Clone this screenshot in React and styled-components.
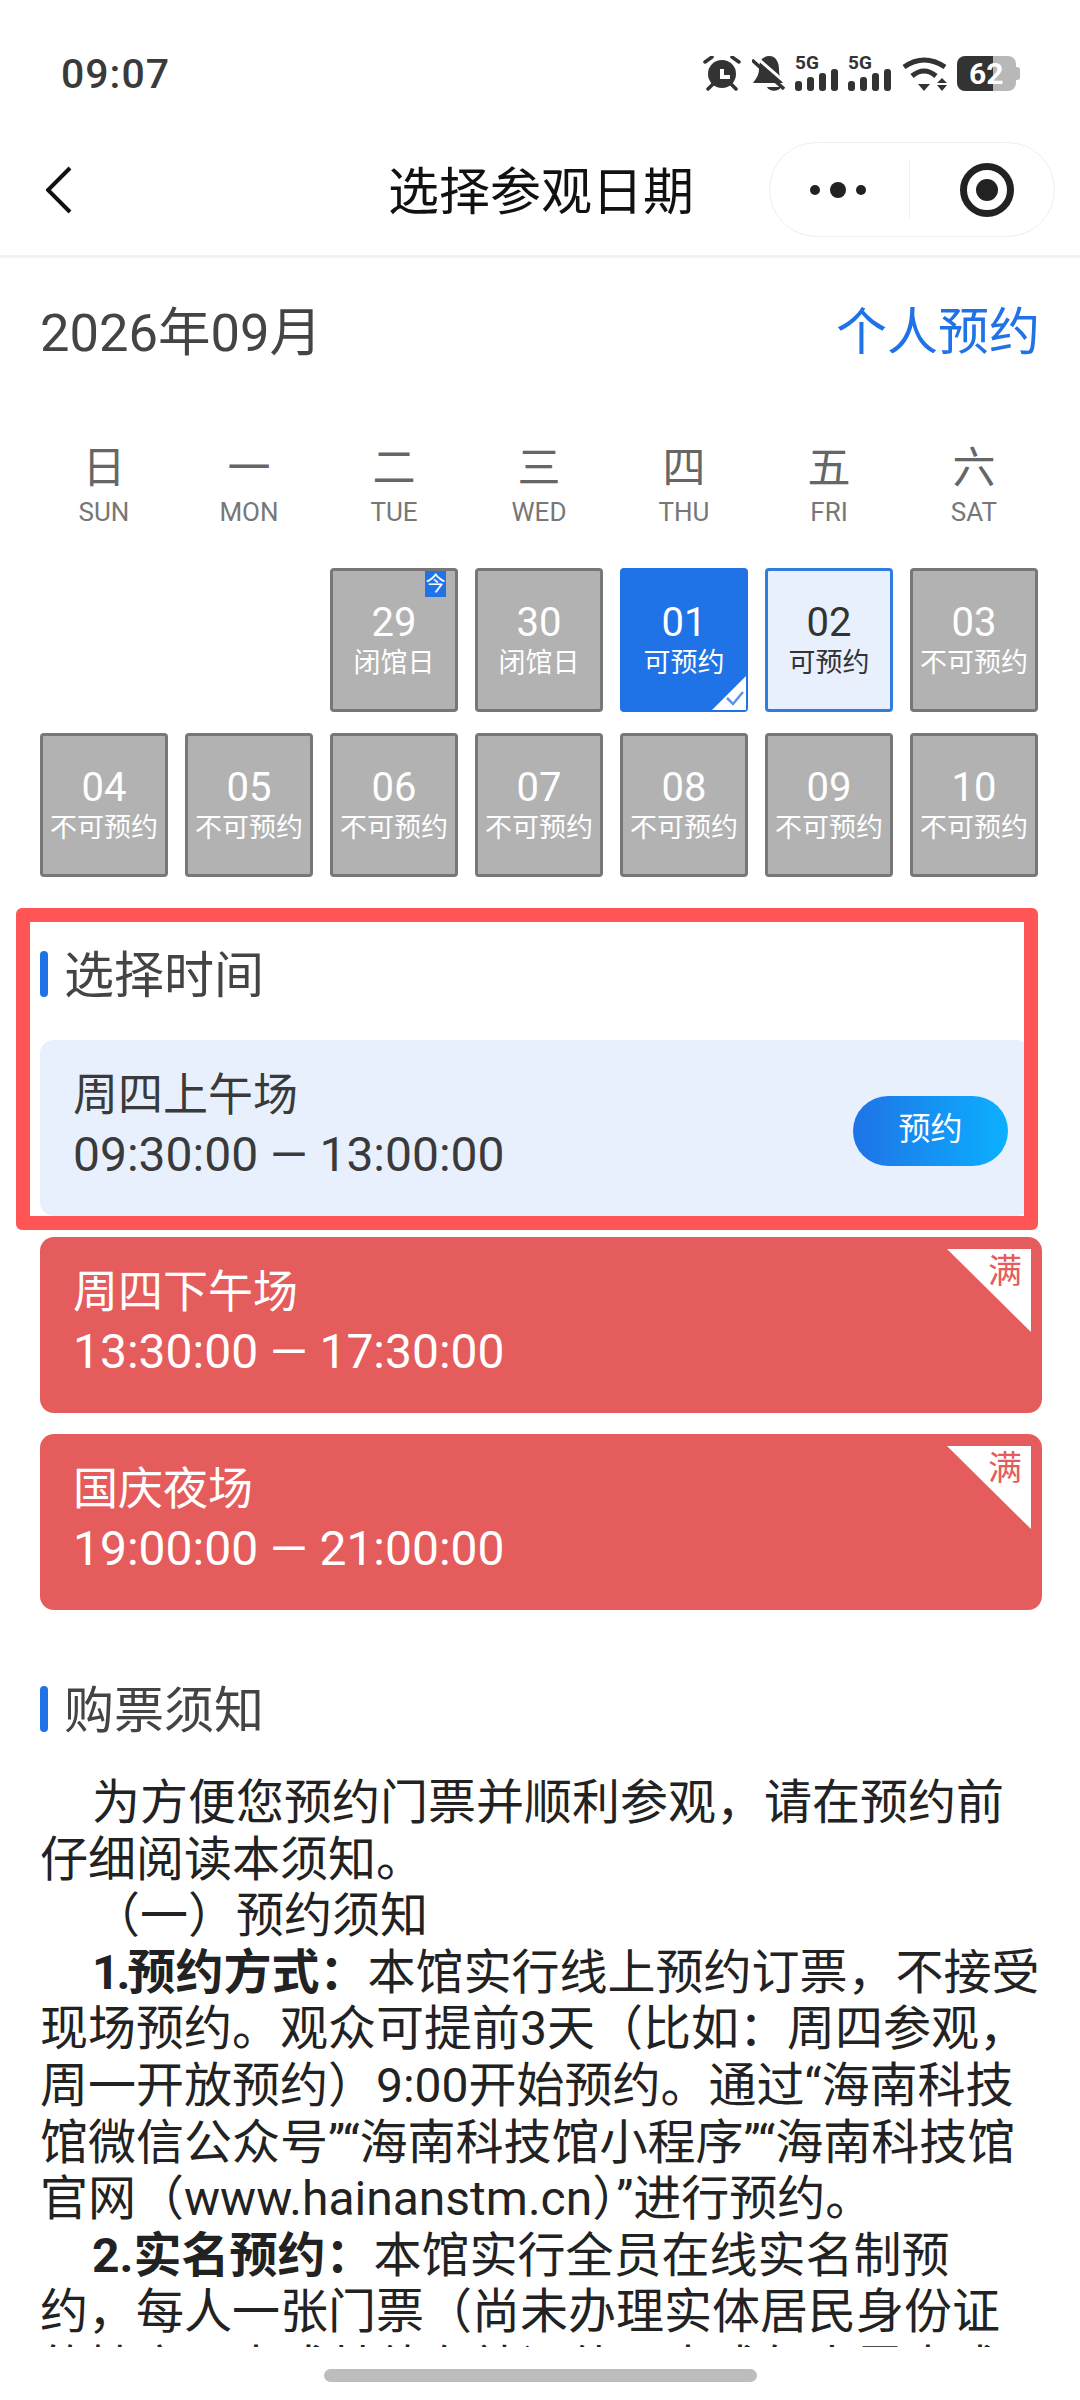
import styled, { createGlobalStyle } from "styled-components"

const GlobalStyle = createGlobalStyle`
html, body {
  margin: 0;
  padding: 0;
  background: #fff;
}
* {
  box-sizing: border-box;
}
`

const Page = styled.div`
position: relative;
width: 1080px;
height: 2400px;
overflow: hidden;
background: #fff;
font-family: Roboto, "Noto Sans CJK SC", sans-serif;
color: #333;
`

const StatusBar = styled.div`
height: 142px;
padding: 56px 60px 0 61px;
display: flex;
justify-content: space-between;
align-items: flex-start;
`
const Clock = styled.div`
font-size: 41px;
line-height: 36px;
font-weight: 500;
letter-spacing: 1px;
color: #3a3a3a;
`
const StatusIcons = styled.div`
display: flex;
align-items: flex-start;
gap: 10px;
`
const Signal = styled.div`
width: ${(props) => props.$w}px;
height: 35px;
display: flex;
flex-direction: column;
`
const SignalLabel = styled.span`
font-size: 19px;
line-height: 13px;
font-weight: 700;
color: #333;
`
const Battery = styled.div`
position: relative;
width: 59px;
height: 35px;
margin-right: 4px;
padding-left: 12px;
border-radius: 8px;
background: linear-gradient(90deg, #333 0 36px, #b8b8b8 36px);
color: #fff;
font-size: 30px;
line-height: 35px;
font-weight: 700;
&::after {
  content: "";
  position: absolute;
  right: -4px;
  top: 11px;
  width: 4px;
  height: 13px;
  border-radius: 0 3px 3px 0;
  background: #b8b8b8;
}
`

const NavBar = styled.div`
height: 116px;
padding: 0 25px 21px 27px;
display: grid;
grid-template-columns: 1fr auto 1fr;
align-items: center;
border-bottom: 3px solid #f2f2f2;
`
const BackButton = styled.div`
padding-left: 19px;
display: flex;
`
const NavTitle = styled.div`
padding-top: 6px;
font-size: 51px;
line-height: 60px;
color: #111;
`
const Capsule = styled.div`
justify-self: end;
width: 286px;
height: 95px;
border: 1px solid #eee;
border-radius: 48px;
display: flex;
align-items: center;
`
const CapsulePart = styled.div`
flex: 1;
padding: ${(props) => props.$pad};
display: flex;
align-items: center;
justify-content: center;
`
const CapsuleLine = styled.div`
width: 1px;
height: 57px;
background: #eee;
`

const Content = styled.div`
padding: 0 40px;
`
const MonthRow = styled.div`
padding-top: 42px;
display: flex;
justify-content: space-between;
align-items: center;
`
const MonthText = styled.div`
font-size: 52.5px;
line-height: 66px;
color: #444;
`
const PersonLink = styled.div`
font-size: 51px;
line-height: 66px;
color: #1f73e6;
`

const DayGrid = styled.div`
display: grid;
grid-template-columns: repeat(7, 128px);
column-gap: 17px;
row-gap: 21px;
`
const WeekRow = styled(DayGrid)`
margin-top: 80px;
margin-bottom: 41px;
`
const WeekDay = styled.div`
display: flex;
flex-direction: column;
align-items: center;
gap: 7px;
color: #666;
`
const WeekZh = styled.div`
font-size: 43px;
line-height: 44px;
`
const WeekEn = styled.div`
font-size: 26px;
line-height: 30px;
color: #777;
`

const cellColors = {
  off: "background: #b2b2b2; border-color: #777; color: #fff;",
  active: "background: #1f73e6; border-color: #1f73e6; color: #fff;",
  open: "background: #e8f0fd; border-color: #2f7de1; color: #333;",
}
const Cell = styled.div`
position: relative;
height: 144px;
padding-top: 28px;
border: 3px solid;
border-radius: 4px;
display: flex;
flex-direction: column;
align-items: center;
${(props) => cellColors[props.$kind]}
`
const CellDay = styled.div`
font-size: 40px;
line-height: 48px;
`
const CellLabel = styled.div`
font-size: 27px;
line-height: 32px;
white-space: nowrap;
`
const TodayBadge = styled.div`
position: absolute;
top: 0;
right: 9px;
width: 21px;
height: 26px;
background: #1f73e6;
color: #fff;
font-size: 20px;
line-height: 26px;
text-align: center;
`
const CellCheck = styled.svg`
position: absolute;
right: -1px;
bottom: -1px;
`

const Section = styled.div`
position: relative;
margin-top: ${(props) => props.$top}px;
`
const SectionTitle = styled.div`
display: flex;
align-items: flex-start;
gap: 16px;
height: 46px;
font-size: 50px;
line-height: 50px;
color: #444;
&::before {
  content: "";
  width: 8px;
  height: 46px;
  border-radius: 4px;
  background: #1f73e6;
}
`
const RedFrame = styled.div`
position: absolute;
top: -43px;
left: -24px;
width: 1022px;
height: 322px;
border: 14px solid #ff5555;
border-radius: 6px;
pointer-events: none;
`
const SessionList = styled.div`
width: 1002px;
margin-top: 43px;
display: flex;
flex-direction: column;
gap: 21px;
`
const SessionCard = styled.div`
position: relative;
height: 176px;
width: ${(props) => (props.$full ? "1002px" : "990px")};
padding: 26px 22px 0 33px;
border-radius: 14px;
display: flex;
justify-content: space-between;
background: ${(props) => (props.$full ? "#e55c5c" : "#e8f0fd")};
color: ${(props) => (props.$full ? "#fff" : "#3a3a3a")};
`
const SessionName = styled.div`
font-size: 45px;
line-height: 59px;
`
const SessionTime = styled.div`
font-size: 48px;
line-height: 59px;
white-space: nowrap;
`
const BookButton = styled.div`
width: 155px;
height: 70px;
margin-top: 30px;
border-radius: 35px;
background: linear-gradient(90deg, #1f73e6, #0bb0ff);
color: #fff;
font-size: 32px;
line-height: 66px;
text-align: center;
`
const FullFlag = styled.div`
position: absolute;
top: 12px;
right: 11px;
width: 84px;
height: 83px;
background: #fff;
clip-path: polygon(0 0, 100% 0, 100% 100%);
color: #e55c5c;
font-size: 34px;
line-height: 44px;
text-align: right;
padding-right: 9px;
`

const Notice = styled.div`
margin-top: 43px;
font-size: 48px;
line-height: 56.6px;
color: #222;
`
const Para = styled.p`
margin: 0;
text-indent: 52px;
`
const NarrowNum = styled.span`
letter-spacing: -3px;
`

const BottomBar = styled.div`
position: absolute;
left: 0;
right: 0;
bottom: 0;
height: 53px;
padding-top: 22px;
background: #fff;
display: flex;
justify-content: center;
`
const HomeLine = styled.div`
width: 433px;
height: 13px;
border-radius: 7px;
background: #bdbdbd;
`

const AlarmIcon = () => (
  <svg width="39" height="35" viewBox="0 0 39 35" fill="none" stroke="#333" strokeLinecap="round">
    <circle cx="19" cy="18" r="14" fill="#333" stroke="none" />
    <path d="M2 6 9 1M36 6 29 1M5 33l5-5M33 33l-5-5" strokeWidth="3.5" />
    <path d="M19 13v8h8" stroke="#fff" strokeWidth="4" strokeLinecap="butt" />
  </svg>
)

const BellOffIcon = () => (
  <svg width="33" height="35" viewBox="0 0 33 35" fill="none">
    <path d="M17 0C9 0 7 8 7 13 7 20 3 24 1 27H31C29 24 27 20 27 13 27 8 25 0 17 0Z" fill="#333" />
    <path d="M15 31H29C27 36 17 36 15 31Z" fill="#333" />
    <path d="M3 0 36 29" stroke="#fff" strokeWidth="3" />
    <path d="M0 4 32 33" stroke="#333" strokeWidth="3.5" />
  </svg>
)

const SignalIcon = ({ w }) => (
  <Signal $w={w}>
    <SignalLabel>5G</SignalLabel>
    <svg width="43" height="22" viewBox="0 0 43 22" fill="#333">
      <rect x="0" y="12" width="7" height="10" rx="3" />
      <rect x="12" y="8" width="7" height="14" rx="3" />
      <rect x="24" y="4" width="7" height="18" rx="3" />
      <rect x="36" y="0" width="7" height="22" rx="3" />
    </svg>
  </Signal>
)

const WifiIcon = () => (
  <svg width="45" height="35" viewBox="0 0 45 35" fill="none">
    <path d="M2 11Q22-3 43 11" stroke="#333" strokeWidth="5" />
    <path d="M10 20Q22 10 34 20" stroke="#333" strokeWidth="5" />
    <path d="M16 28H28L22 35Z" fill="#333" />
    <path d="M40 22 45 27H35ZM35 29H45L40 35Z" fill="#333" />
  </svg>
)

const BackIcon = () => (
  <svg width="26" height="48" viewBox="0 0 26 48" fill="none" stroke="#111" strokeWidth="4">
    <polyline points="24,2 2,24 24,46" />
  </svg>
)

const DotsIcon = () => (
  <svg width="56" height="16" viewBox="0 0 56 16" fill="#222">
    <circle cx="5" cy="8" r="5" />
    <circle cx="28" cy="8" r="8" />
    <circle cx="51" cy="8" r="5" />
  </svg>
)

const TargetIcon = () => (
  <svg width="54" height="54" viewBox="0 0 54 54">
    <circle cx="27" cy="27" r="23.5" fill="none" stroke="#222" strokeWidth="7" />
    <circle cx="27" cy="27" r="11" fill="#222" />
  </svg>
)

const weekDays = [
  ["日", "SUN"],
  ["一", "MON"],
  ["二", "TUE"],
  ["三", "WED"],
  ["四", "THU"],
  ["五", "FRI"],
  ["六", "SAT"],
]

const days = [
  { day: "29", label: "闭馆日", kind: "off", today: true },
  { day: "30", label: "闭馆日", kind: "off" },
  { day: "01", label: "可预约", kind: "active" },
  { day: "02", label: "可预约", kind: "open" },
  { day: "03", label: "不可预约", kind: "off" },
  { day: "04", label: "不可预约", kind: "off" },
  { day: "05", label: "不可预约", kind: "off" },
  { day: "06", label: "不可预约", kind: "off" },
  { day: "07", label: "不可预约", kind: "off" },
  { day: "08", label: "不可预约", kind: "off" },
  { day: "09", label: "不可预约", kind: "off" },
  { day: "10", label: "不可预约", kind: "off" },
]

const sessions = [
  { name: "周四上午场", time: "09:30:00 — 13:00:00" },
  { name: "周四下午场", time: "13:30:00 — 17:30:00", full: true },
  { name: "国庆夜场", time: "19:00:00 — 21:00:00", full: true },
]

const App = () => {
  return (
    <Page>
      <GlobalStyle />
      <StatusBar>
        <Clock>09:07</Clock>
        <StatusIcons>
          <AlarmIcon />
          <BellOffIcon />
          <SignalIcon w={43} />
          <SignalIcon w={44} />
          <WifiIcon />
          <Battery>62</Battery>
        </StatusIcons>
      </StatusBar>
      <NavBar>
        <BackButton><BackIcon /></BackButton>
        <NavTitle>选择参观日期</NavTitle>
        <Capsule>
          <CapsulePart $pad="0 4px 0 0"><DotsIcon /></CapsulePart>
          <CapsuleLine />
          <CapsulePart $pad="0 0 0 9px"><TargetIcon /></CapsulePart>
        </Capsule>
      </NavBar>
      <Content>
        <MonthRow>
          <MonthText>2026年09月</MonthText>
          <PersonLink>个人预约</PersonLink>
        </MonthRow>
        <WeekRow>
          {weekDays.map((item) => (
            <WeekDay key={item[1]}>
              <WeekZh>{item[0]}</WeekZh>
              <WeekEn>{item[1]}</WeekEn>
            </WeekDay>
          ))}
        </WeekRow>
        <DayGrid>
          <div />
          <div />
          {days.map((item) => (
            <Cell $kind={item.kind} key={item.day}>
              {item.today && <TodayBadge>今</TodayBadge>}
              <CellDay>{item.day}</CellDay>
              <CellLabel>{item.label}</CellLabel>
              {item.kind === "active" && (
                <CellCheck width="34" height="34" viewBox="0 0 34 34">
                  <path d="M34 0V34H0Z" fill="#fff" />
                  <path d="M15 22 21 28 31 16" fill="none" stroke="#5b93e8" strokeWidth="2.5" />
                </CellCheck>
              )}
            </Cell>
          ))}
        </DayGrid>
        <Section $top={74}>
          <SectionTitle>选择时间</SectionTitle>
          <SessionList>
            {sessions.map((item) => (
              <SessionCard $full={item.full} key={item.name}>
                <div>
                  <SessionName>{item.name}</SessionName>
                  <SessionTime>{item.time}</SessionTime>
                </div>
                {item.full ? <FullFlag>满</FullFlag> : <BookButton>预约</BookButton>}
              </SessionCard>
            ))}
          </SessionList>
          <RedFrame />
        </Section>
        <Section $top={76}>
          <SectionTitle>购票须知</SectionTitle>
          <Notice>
            <Para>为方便您预约门票并顺利参观，请在预约前仔细阅读本须知。</Para>
            <Para>（一）预约须知</Para>
            <Para>
              <strong><NarrowNum>1.</NarrowNum>预约方式：</strong>本馆实行线上预约订票，不接受现场预约。观众可提前3天（比如：周四参观，周一开放预约）9:00开始预约。通过“海南科技馆微信公众号”“海南科技馆小程序”“海南科技馆官网（www.hainanstm.cn）”进行预约。
            </Para>
            <Para>
              <strong>2.实名预约：</strong>本馆实行全员在线实名制预约，每人一张门票（尚未办理实体居民身份证的持户口本或其他有效证件，未成年人需由成人陪同。
            </Para>
          </Notice>
        </Section>
      </Content>
      <BottomBar>
        <HomeLine />
      </BottomBar>
    </Page>
  )
}

export default App
